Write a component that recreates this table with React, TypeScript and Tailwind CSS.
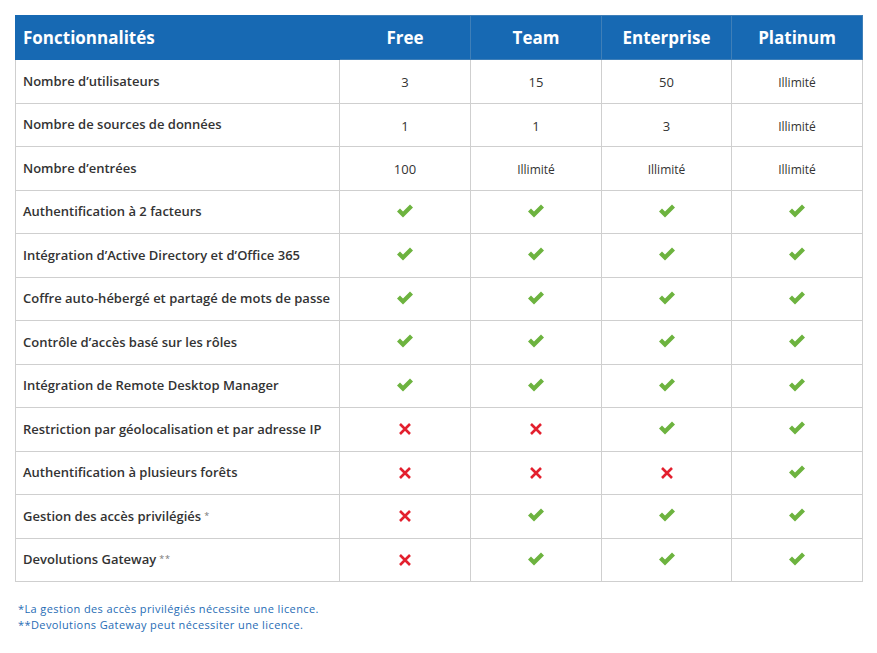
import type { FC } from "react"

type Cell = string | boolean

const ROWS: { label: string; note?: string; cells: Cell[] }[] = [
  { label: "Nombre d’utilisateurs", cells: ["3", "15", "50", "Illimité"] },
  { label: "Nombre de sources de données", cells: ["1", "1", "3", "Illimité"] },
  { label: "Nombre d’entrées", cells: ["100", "Illimité", "Illimité", "Illimité"] },
  { label: "Authentification à 2 facteurs", cells: [true, true, true, true] },
  { label: "Intégration d’Active Directory et d’Office 365", cells: [true, true, true, true] },
  { label: "Coffre auto-hébergé et partagé de mots de passe", cells: [true, true, true, true] },
  { label: "Contrôle d’accès basé sur les rôles", cells: [true, true, true, true] },
  { label: "Intégration de Remote Desktop Manager", cells: [true, true, true, true] },
  { label: "Restriction par géolocalisation et par adresse IP", cells: [false, false, true, true] },
  { label: "Authentification à plusieurs forêts", cells: [false, false, false, true] },
  { label: "Gestion des accès privilégiés", note: "*", cells: [false, true, true, true] },
  { label: "Devolutions Gateway", note: "**", cells: [false, true, true, true] },
]

const Check = () => (
  <svg width="18" height="16" viewBox="0 0 18 16" className="block mx-auto -mt-[2px]">
    <path d="M1 8.5 L4 5.5 L7 8.5 L14 1.5 L17 4.5 L7 14.5 Z" fill="#6db33f" />
  </svg>
)

const Cross = () => (
  <svg width="14" height="14" viewBox="0 0 14 14" className="block mx-auto">
    <path d="M2 2 L12 12 M12 2 L2 12" stroke="#e3202e" strokeWidth="2.6" />
  </svg>
)

const App: FC = () => {
  return (
    <div
      className="w-[877px] h-[653px] bg-white pt-[15px] px-[15px]"
      style={{ fontFamily: '"Open Sans", "Liberation Sans", sans-serif' }}
    >
      <table className="w-[847px] border-collapse table-fixed">
        <colgroup>
          <col className="w-[324px]" />
          <col className="w-[131px]" />
          <col className="w-[131px]" />
          <col className="w-[130px]" />
          <col className="w-[131px]" />
        </colgroup>
        <thead>
          <tr className="h-[44px] bg-[#1769b3] text-white text-[17px] font-bold">
            <th className="text-left pl-[7px] border border-[#1769b3]">Fonctionnalités</th>
            {["Free", "Team", "Enterprise", "Platinum"].map(p => (
              <th key={p} className="text-center border border-[#3f7fb8]">
                {p}
              </th>
            ))}
          </tr>
        </thead>
        <tbody>
          {ROWS.map(row => (
            <tr key={row.label} className="h-[43.5px]">
              <td className="pl-[7px] text-[13px] font-semibold text-[#333] border border-[#cfcfcf]">
                {row.label}
                {row.note && (
                  <span className="ml-[3px] text-[9px] font-normal tracking-[1px] text-[#777] align-[2px]">{row.note}</span>
                )}
              </td>
              {row.cells.map((c, i) => (
                <td key={i} className="text-center border border-[#cfcfcf] text-[#333]">
                  {c === true ? (
                    <Check />
                  ) : c === false ? (
                    <Cross />
                  ) : c === "Illimité" ? (
                    <span className="text-[12px]">{c}</span>
                  ) : (
                    <span className="text-[13px]">{c}</span>
                  )}
                </td>
              ))}
            </tr>
          ))}
        </tbody>
      </table>
      <div className="mt-[19px] pl-[3px] text-[11px] leading-[16px] font-medium tracking-[0.4px] text-[#1f6cb5]">
        <p>*La gestion des accès privilégiés nécessite une licence.</p>
        <p>**Devolutions Gateway peut nécessiter une licence.</p>
      </div>
    </div>
  )
}

export default App
